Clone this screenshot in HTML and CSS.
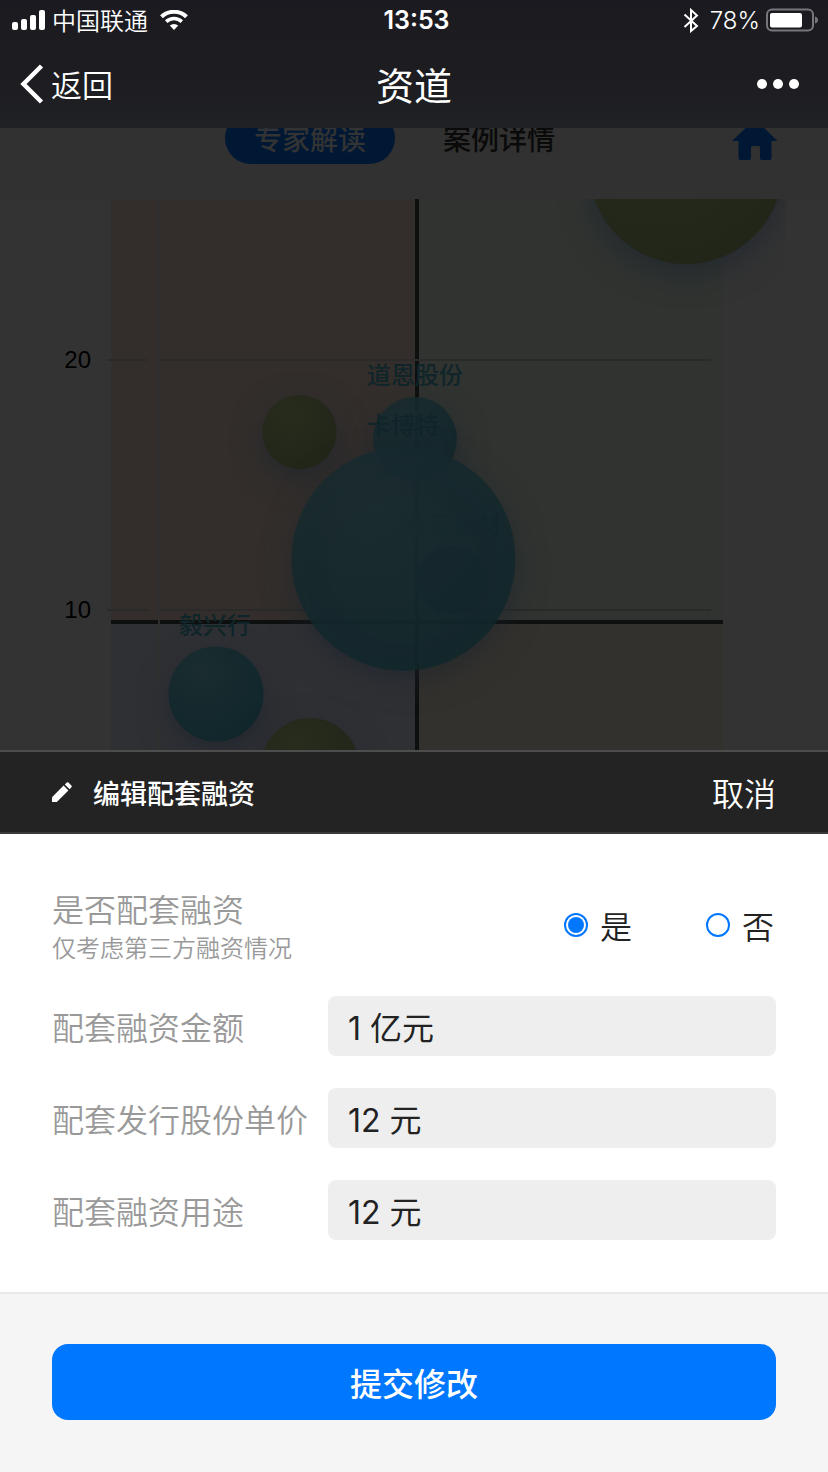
FILE: index.html
```html
<!DOCTYPE html>
<html lang="zh-CN">
<head>
<meta charset="utf-8">
<meta name="viewport" content="width=device-width, initial-scale=1">
<title>资道</title>
<link rel="stylesheet" href="styles.css">
</head>
<body>
<div class="app">
  <header class="top">
    <div class="status">
      <div class="status-left">
        <svg class="signal" width="34" height="22" viewBox="0 0 34 22" aria-hidden="true"><rect x="0" y="13" width="6" height="8" rx="2"/><rect x="9" y="10" width="6" height="11" rx="2"/><rect x="18" y="6" width="6" height="15" rx="2"/><rect x="27" y="1" width="6" height="20" rx="2"/></svg>
        <span>中国联通</span>
        <svg class="wifi" width="28" height="20" viewBox="0 0 28 20" aria-hidden="true"><path d="M1.5 6.8a18 18 0 0 1 25 0" fill="none" stroke="#fff" stroke-width="4"/><path d="M6.2 11.6a11.5 11.5 0 0 1 15.6 0" fill="none" stroke="#fff" stroke-width="3.6"/><path d="M9.8 15.6a6 6 0 0 1 8.4 0L14 20z" fill="#fff"/></svg>
      </div>
      <time class="clock">13:53</time>
      <div class="status-right">
        <svg width="16" height="26" viewBox="0 0 16 26" fill="none" stroke="#fff" stroke-width="2" aria-hidden="true"><path d="M1.500 7.500l12.500 11.500L8 24V3l6 5.500L1.500 20"/></svg>
        <span>78%</span>
        <svg width="52" height="24" viewBox="0 0 52 24" aria-hidden="true"><rect x="1" y="1.500" width="46" height="21" rx="5" fill="none" stroke="#77777b" stroke-width="2"/><rect x="4" y="5" width="32" height="14.500" rx="2" fill="#fff"/><path d="M49 8.500q3 1 3 3.500t-3 3.500z" fill="#77777b"/></svg>
      </div>
    </div>
    <nav class="nav">
      <button class="back" type="button"><svg width="24" height="40" viewBox="0 0 24 40" aria-hidden="true"><path d="M21.500 2L3.500 20l18 18" fill="none" stroke="#fff" stroke-width="4.500"/></svg>返回</button>
      <h1>资道</h1>
      <button class="more" type="button" aria-label="更多"><svg width="42" height="10" viewBox="0 0 42 10" fill="#fff" aria-hidden="true"><circle cx="5" cy="5" r="5"/><circle cx="21" cy="5" r="5"/><circle cx="37" cy="5" r="5"/></svg></button>
    </nav>
  </header>

  <main class="page">
    <div class="tabs">
      <button class="tab active" type="button">专家解读</button>
      <button class="tab" type="button">案例详情</button>
      <a class="home" href="#" aria-label="首页"><svg width="46" height="44" viewBox="0 0 46 44" aria-hidden="true"><path d="M23 3L45.500 25H39.500v17q0 2-2 2H30q-2 0-2-2V31.500q0-1.500-1.500-1.500h-6q-1.500 0-1.500 1.500V42q0 2-2 2H8.500q-2 0-2-2V25H0z"/></svg></a>
    </div>
    <svg class="chart" viewBox="0 199 828 551" preserveAspectRatio="xMidYMin slice" role="img" aria-label="气泡图">
      <defs>
        <radialGradient id="teal" cx=".35" cy=".25" r=".75"><stop offset="0" stop-color="#1a2c30"/><stop offset="1" stop-color="#11272b"/></radialGradient>
        <radialGradient id="green" cx=".35" cy=".25" r=".75"><stop offset="0" stop-color="#282c1d"/><stop offset="1" stop-color="#212619"/></radialGradient>
        <filter id="glow" x="-60%" y="-60%" width="220%" height="220%" color-interpolation-filters="sRGB"><feDropShadow dx="0" dy="10" stdDeviation="15" flood-color="#1c242c" flood-opacity=".65"/></filter>
        <clipPath id="plot"><rect x="107" y="199" width="679" height="551"/></clipPath>
      </defs>
      <rect class="q1" x="111" y="199" width="306" height="423"/>
      <rect class="q2" x="417" y="199" width="306" height="423"/>
      <rect class="q3" x="111" y="622" width="306" height="128"/>
      <rect class="q4" x="417" y="622" width="306" height="128"/>
      <path class="axis" d="M417 199V750M111 622H158M160 622H723"/>
      <path class="faint" d="M159 199V750"/>
      <path class="grid" d="M107 360H148M160 360H711M107 610H148M160 610H711"/>
      <text class="tick" x="91" y="368">20</text>
      <text class="tick" x="91" y="618">10</text>
      <text class="name hidden-name" x="405" y="534">至正新材</text>
      <g clip-path="url(#plot)">
        <circle cx="686" cy="167" r="97" fill="url(#green)" filter="url(#glow)"/>
        <circle cx="299.500" cy="432" r="37" fill="url(#green)" filter="url(#glow)"/>
        <circle cx="415" cy="439" r="42" fill="url(#teal)" fill-opacity=".88" filter="url(#glow)"/>
        <circle cx="403.500" cy="559" r="112" fill="url(#teal)" fill-opacity=".85" filter="url(#glow)"/>
        <circle cx="452" cy="580" r="34" fill="#10262a" fill-opacity=".3"/>
        <circle cx="216" cy="694" r="47.500" fill="url(#teal)" filter="url(#glow)"/>
        <circle cx="310" cy="767" r="49" fill="url(#green)" filter="url(#glow)"/>
      </g>
      <text class="name" x="367" y="384">道恩股份</text>
      <text class="name" x="367" y="434">卡博特</text>
      <text class="name" x="179" y="634">毅兴行</text>
    </svg>
  </main>

  <form class="sheet">
    <div class="sheet-head">
      <svg class="pencil" width="20" height="20" viewBox="0 0 20 20" fill="#fff" aria-hidden="true"><path d="M0 15.200L11.600 3.600l4.800 4.800L4.800 20H0z"/><path d="M12.800 2.400L14.800.6q.8-.8 1.600 0l3 3q.8.800 0 1.600L17.600 7.200z"/></svg>
      <h2>编辑配套融资</h2>
      <button class="cancel" type="button">取消</button>
    </div>
    <div class="sheet-body">
      <div class="choice" role="radiogroup" aria-labelledby="q-title">
        <div class="question">
          <div class="question-title" id="q-title">是否配套融资</div>
          <div class="question-note">仅考虑第三方融资情况</div>
        </div>
        <div class="options">
          <label class="option"><input type="radio" name="match" checked>是</label>
          <label class="option"><input type="radio" name="match">否</label>
        </div>
      </div>
      <div class="field"><label for="amount">配套融资金额</label><input id="amount" type="text" value="1 亿元"></div>
      <div class="field"><label for="price">配套发行股份单价</label><input id="price" type="text" value="12 元"></div>
      <div class="field"><label for="usage">配套融资用途</label><input id="usage" type="text" value="12 元"></div>
    </div>
    <div class="sheet-foot"><button class="submit" type="submit">提交修改</button></div>
  </form>
</div>
</body>
</html>
```
FILE: styles.css
```css
* { box-sizing: border-box; }
body { margin: 0; font-family: "Noto Sans CJK SC", sans-serif; background: #333; }
button { border: 0; padding: 0; background: none; font: inherit; color: inherit; cursor: pointer; }
h1, h2 { margin: 0; }
svg { display: block; flex: none; }

.app { min-height: 100vh; display: flex; flex-direction: column; }

.top { color: #fff; background: linear-gradient(#1b1a20, #1d1d21 60%, #202125); }
.status { height: 40px; padding: 0 10px 0 12px; display: grid; grid-template-columns: 1fr auto 1fr; align-items: center; font-size: 24px; font-weight: 350; }
.status-left, .status-right { display: flex; align-items: center; }
.status-left { gap: 6px; line-height: 36px; }
.signal { fill: #fff; }
.wifi { margin-left: 6px; }
.clock, .status-right { font-family: Inter, sans-serif; }
.clock { font-weight: 600; font-size: 25px; margin-left: 3px; }
.status-right { justify-content: flex-end; gap: 6px; }
.status-right span { margin-left: 5px; }
.nav { height: 88px; padding: 0 20px; display: grid; grid-template-columns: 1fr auto 1fr; align-items: center; }
.back { display: flex; align-items: center; gap: 7px; font-size: 31px; font-weight: 350; line-height: 40px; }
.nav h1 { font-size: 38px; font-weight: 400; line-height: 48px; }
.more { justify-self: end; padding: 16px 0; margin-right: 9px; }

.page { flex: 1 0 622px; height: 622px; overflow: hidden; display: flex; flex-direction: column; justify-content: flex-end; background: #333; }
.tabs { flex: none; padding: 16px 50px 35px 225px; display: flex; align-items: center; background: #313131; }
.tab { height: 52px; width: 170px; border-radius: 26px; font-size: 28px; font-weight: 500; color: #0a0a0a; }
.tab + .tab { margin-left: 19px; }
.tab.active { background: #001833; color: #333; }
.home { margin-left: auto; fill: #001833; }
.chart { width: 100%; height: 551px; }
.q1 { fill: #332e2b; }
.q2 { fill: #303330; }
.q3 { fill: #2f3034; }
.q4 { fill: #33312d; }
.axis { stroke: #0e0f0f; stroke-width: 4; }
.faint { stroke: #303030; stroke-width: 2; }
.grid { stroke: #292a29; stroke-width: 2; }
.tick { font: 24px "Liberation Sans", sans-serif; text-anchor: end; fill: #000; }
.name { font: 500 24px "Noto Sans CJK SC", sans-serif; fill: #0f2529; }
.hidden-name { fill: #0f2023; }

.sheet { background: #fff; }
.sheet-head { height: 84px; padding: 0 52px; display: flex; align-items: center; color: #fff; background: #232323; border-top: 2px solid #4d4d4d; border-bottom: 2px solid #393939; }
.sheet-head h2 { margin-left: 21px; font-size: 27px; font-weight: 500; }
.cancel { margin-left: auto; font-size: 32px; font-weight: 350; }
.sheet-body { padding: 52px; display: flex; flex-direction: column; gap: 32px; font-size: 32px; font-weight: 350; color: #222; }
.choice { display: flex; justify-content: space-between; align-items: center; }
.question { color: #999; }
.question-title { line-height: 44px; }
.question-note { font-size: 24px; line-height: 34px; }
.options { display: flex; gap: 74px; padding-right: 2px; }
.option { display: flex; align-items: center; gap: 12px; line-height: 44px; }
.option input { appearance: none; width: 24px; height: 24px; margin: 0; border: 2px solid #07f; border-radius: 50%; padding: 2px; background: #fff content-box; }
.option input:checked { background-color: #07f; }
.field { display: grid; grid-template-columns: 276px 1fr; align-items: center; }
.field label { color: #999; line-height: 44px; white-space: nowrap; }
.field input { width: 100%; min-width: 0; height: 60px; border: 0; border-radius: 8px; padding: 0 20px; background: #eee; color: #222; font: 400 32px Inter, "Noto Sans CJK SC", sans-serif; }
.sheet-foot { padding: 50px 52px 52px; background: #f5f5f5; border-top: 2px solid #e8e8e8; }
.submit { width: 100%; height: 76px; border-radius: 16px; background: #07f; color: #fff; font-size: 32px; font-weight: 500; }
```
